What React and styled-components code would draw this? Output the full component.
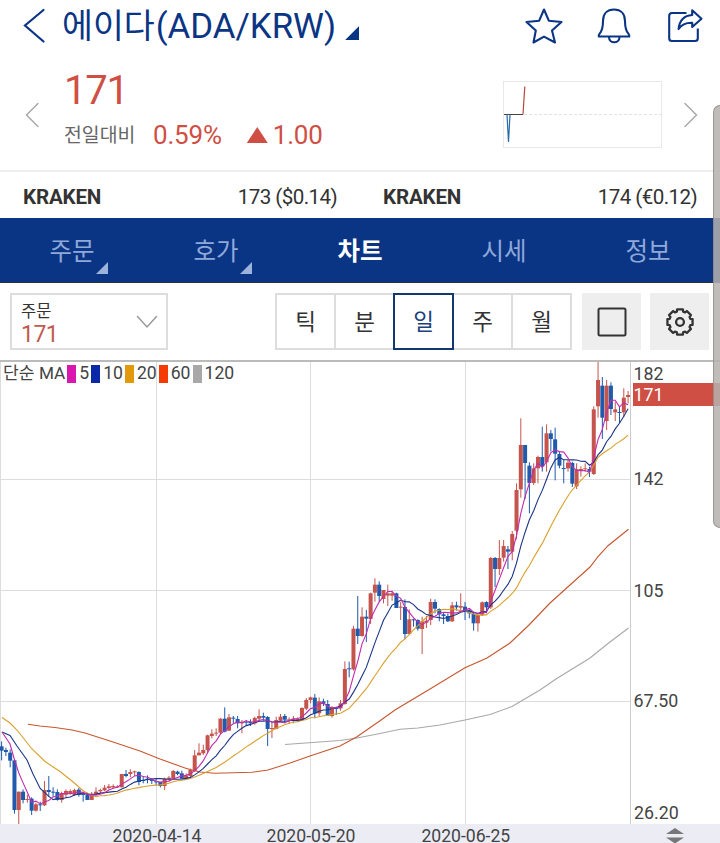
import React from 'react';
import styled, {createGlobalStyle} from 'styled-components';

const NAVY = '#0a3584';
const RED = '#cf4f45';
const BLUE = '#1f5aad';

const GlobalStyle = createGlobalStyle`
  * { box-sizing: border-box; }
  body {
    margin: 0;
    background: #fff;
    color: #333;
    font-family: Roboto, "Noto Sans CJK KR", sans-serif;
    overflow: hidden;
  }
  svg { display: block; flex: none; }
`;

const Screen = styled.div`
  position: relative;
  width: 720px;
  height: 843px;
  overflow: hidden;
  display: flex;
  flex-direction: column;
`;

const Header = styled.header`
  height: 51px;
  display: flex;
  align-items: center;
  padding: 0 16.5px 0 22px;
  color: ${NAVY};
`;

const Title = styled.h1`
  margin: 2px 0 0 15px;
  font-size: 34.8px;
  font-weight: 400;
  line-height: 51px;
  white-space: nowrap;
`;

const Korean = styled.span`
  margin-right: 1px;
  font-size: 33.6px;
`;

const Corner = styled.span`
  width: ${p => p.$size}px;
  height: ${p => p.$size}px;
  background: ${p => p.$color};
  clip-path: polygon(100% 0, 100% 100%, 0 100%);
`;

const TitleCorner = styled(Corner)`
  margin: 15px 0 0 9px;
`;

const HeaderIcons = styled.div`
  margin-left: auto;
  display: flex;
  align-items: center;
  gap: 30px;
`;

const PricePanel = styled.section`
  height: 121px;
  display: flex;
  align-items: flex-start;
  padding: 17px 21px 0 24px;
  border-bottom: 2px solid #eee;
`;

const Arrow = styled.div`
  width: 16px;
  padding-top: 34px;
`;

const Quote = styled.div`
  margin-left: 24px;
  flex: 1;
  color: ${RED};
`;

const Price = styled.div`
  padding-top: 1px;
  font-size: 40px;
  line-height: 44px;
  letter-spacing: -1.2px;
`;

const Change = styled.div`
  display: flex;
  align-items: center;
  margin-top: 4px;
  font-size: 26px;
  line-height: 36px;
  letter-spacing: -0.2px;
`;

const ChangeLabel = styled.span`
  width: 89px;
  padding-top: 2px;
  color: #666;
  font-size: 19.4px;
  line-height: 34px;
  letter-spacing: 0;
`;

const UpMark = styled.span`
  width: 21px;
  height: 16px;
  margin: 0 5px 0 25px;
  background: ${RED};
  clip-path: polygon(50% 0, 100% 100%, 0 100%);
`;

const MiniChart = styled.div`
  margin: 13px 21px 0 0;
`;

const Exchanges = styled.section`
  height: 46px;
  display: grid;
  grid-template-columns: 1fr 1fr;
`;

const Exchange = styled.div`
  display: flex;
  justify-content: space-between;
  padding: 2px 23px 0;
  font-size: 20.6px;
  line-height: 46px;
  letter-spacing: -0.6px;

  b { letter-spacing: -0.2px; }
`;

const Tabs = styled.nav`
  height: 65px;
  display: grid;
  grid-template-columns: repeat(5, 1fr);
  background: ${NAVY};
  border-bottom: 1px solid #26303f;
`;

const Tab = styled.div`
  position: relative;
  padding-top: 1px;
  color: ${p => (p.$active ? '#fff' : '#8fa8da')};
  font-size: 24.5px;
  font-weight: ${p => (p.$active ? 700 : 400)};
  line-height: 66px;
  height: 64px;
  text-align: center;
`;

const TabCorner = styled(Corner)`
  position: absolute;
  right: 36px;
  bottom: 8px;
`;

const Toolbar = styled.section`
  height: 77px;
  display: flex;
  align-items: flex-start;
  padding: 10px 10px 0;
`;

const OrderSelect = styled.div`
  width: 158px;
  height: 57px;
  display: flex;
  align-items: center;
  justify-content: space-between;
  padding: 0 8px 0 9px;
  border: 2px solid #ddd;
`;

const OrderLabel = styled.div`
  font-size: 16.5px;
  line-height: 20px;
  padding-top: 5px;
`;

const OrderPrice = styled.div`
  color: #bf5b50;
  font-size: 23px;
  line-height: 25px;
  letter-spacing: -0.5px;
`;

const Periods = styled.div`
  display: flex;
  margin-left: 107px;
`;

const Period = styled.div`
  width: 61px;
  height: 57px;
  margin-right: -2px;
  border: 2px solid ${p => (p.$active ? '#12386f' : '#ddd')};
  z-index: ${p => (p.$active ? 1 : 0)};
  color: ${p => (p.$active ? '#1c427c' : '#333')};
  font-size: 22.5px;
  line-height: 55px;
  text-align: center;
`;

const ToolButton = styled.div`
  width: 59px;
  height: 57px;
  margin-left: ${p => p.$gap}px;
  display: flex;
  align-items: center;
  justify-content: center;
  background: #eee;
`;

const ChartPanel = styled.section`
  position: relative;
  height: 483px;
  border-top: 2px solid #bbb;
`;

const Legend = styled.div`
  position: absolute;
  left: 3px;
  top: 0;
  display: flex;
  align-items: center;
  color: #444;
  font-size: 17.6px;
  line-height: 23px;
`;

const LegendName = styled.span`
  font-size: 17.2px;
`;

const Swatch = styled.i`
  width: 9px;
  height: 18px;
  margin: 0 3px 0 2px;
  background: ${p => p.$color};
`;

const ScrollThumb = styled.div`
  position: absolute;
  left: 713px;
  top: 105px;
  width: 14px;
  height: 423px;
  border: 1px solid rgba(130, 125, 120, 0.6);
  border-radius: 7px;
  background: rgba(181, 177, 173, 0.86);
`;

// Daily candles, grouped by the height they trade at.
// [up, high, top, bottom, low] in thirds of a pixel below the group base.
const GROUPS = [
  {base: 700, rows: [
    [0, 124, 139, 152, 181], [0, 143, 150, 156, 168], [0, 148, 158, 182, 202],
    [0, 181, 181, 330, 341], [1, 275, 275, 330, 372], [0, 268, 275, 300, 310],
    [1, 284, 297, 300, 308], [0, 292, 296, 332, 345], [1, 308, 313, 332, 335],
    [0, 305, 313, 316, 333], [1, 243, 270, 316, 318], [0, 228, 270, 276, 290],
    [0, 262, 275, 278, 290], [0, 268, 276, 300, 302], [1, 275, 279, 300, 308],
    [1, 268, 273, 284, 294], [1, 268, 273, 282, 284], [1, 266, 270, 285, 288],
    [0, 264, 269, 285, 290], [0, 278, 281, 285, 305], [0, 278, 283, 300, 300],
    [1, 276, 283, 300, 300], [1, 262, 275, 284, 284], [1, 266, 270, 274, 280],
    [1, 255, 263, 271, 274], [1, 252, 259, 264, 268], [1, 253, 258, 262, 266],
    [1, 256, 259, 262, 264], [1, 222, 222, 262, 262], [0, 210, 222, 228, 232],
    [1, 208, 216, 222, 232], [1, 212, 214, 217, 228], [0, 214, 216, 246, 256],
    [0, 228, 240, 243, 250], [0, 226, 236, 240, 250], [0, 234, 239, 243, 252],
    [0, 236, 244, 247, 256], [0, 246, 246, 258, 262], [1, 233, 235, 258, 270],
    [1, 228, 233, 237, 242], [1, 210, 213, 235, 238], [0, 212, 215, 222, 226],
    [0, 212, 220, 236, 238], [1, 220, 226, 236, 240], [1, 206, 210, 228, 236],
    [1, 150, 166, 213, 215], [1, 130, 158, 166, 166], [1, 134, 150, 160, 165],
    [1, 104, 106, 150, 160], [1, 88, 101, 108, 115],
  ]},
  {base: 660, rows: [
    [1, 205, 218, 221, 228], [1, 174, 176, 218, 222], [0, 142, 176, 215, 217],
    [1, 162, 172, 212, 213], [0, 168, 173, 176, 190], [0, 168, 177, 190, 205],
    [1, 180, 186, 190, 220], [0, 180, 185, 188, 198], [0, 178, 186, 190, 198],
    [1, 170, 174, 190, 194], [1, 148, 168, 176, 180], [0, 158, 168, 173, 182],
    [0, 168, 171, 207, 258], [1, 186, 204, 207, 234], [1, 170, 180, 207, 208],
    [1, 162, 170, 182, 185], [0, 162, 168, 179, 190], [1, 172, 178, 181, 192],
    [1, 168, 176, 179, 190], [1, 172, 177, 180, 186], [1, 142, 144, 180, 182],
    [1, 114, 120, 146, 150], [1, 110, 112, 120, 130], [0, 102, 113, 160, 175],
    [1, 112, 124, 160, 170], [0, 116, 124, 131, 138], [0, 120, 132, 168, 168],
    [1, 138, 142, 168, 173], [0, 140, 142, 147, 165], [1, 120, 130, 145, 152],
  ]},
  {base: 560, rows: [
    [1, 304, 327, 432, 434], [0, 305, 325, 328, 352], [1, 198, 206, 328, 332],
    [0, 108, 206, 228, 252], [1, 142, 170, 228, 230], [0, 150, 170, 176, 246],
    [1, 98, 100, 177, 192], [1, 55, 74, 98, 125], [0, 64, 74, 108, 125],
    [1, 90, 90, 117, 130], [1, 74, 100, 107, 138], [1, 92, 100, 107, 122],
    [0, 98, 100, 144, 144], [1, 125, 140, 143, 180], [0, 118, 141, 222, 238],
    [1, 148, 178, 222, 224], [0, 176, 178, 181, 200], [0, 178, 180, 206, 212],
    [1, 170, 184, 207, 282], [1, 168, 182, 188, 204], [1, 116, 126, 180, 195],
    [0, 118, 126, 146, 160], [0, 145, 147, 163, 184], [0, 158, 163, 168, 192],
    [0, 160, 168, 184, 186], [1, 126, 136, 184, 186], [0, 125, 136, 142, 152],
    [1, 100, 138, 143, 155], [0, 126, 140, 152, 180], [0, 148, 152, 160, 175],
    [0, 158, 162, 190, 212], [1, 160, 165, 190, 215], [1, 124, 127, 166, 168],
    [0, 124, 126, 142, 160],
  ]},
  {base: 355, rows: [
    [1, 606, 609, 757, 762], [0, 606, 609, 642, 696], [1, 555, 609, 642, 660],
    [1, 555, 573, 608, 620], [0, 573, 583, 590, 642], [1, 528, 537, 590, 616],
    [1, 385, 405, 527, 553], [1, 190, 270, 403, 428], [0, 270, 270, 324, 432],
    [0, 322, 332, 384, 475], [1, 325, 340, 384, 390], [1, 302, 306, 340, 385],
    [0, 215, 306, 334, 350], [1, 208, 235, 322, 350], [0, 225, 235, 252, 290],
    [0, 218, 253, 296, 376], [0, 290, 297, 332, 340], [0, 315, 339, 342, 385],
    [1, 315, 323, 340, 350], [0, 320, 324, 386, 396], [1, 325, 343, 394, 402],
    [1, 334, 342, 348, 365], [1, 325, 340, 343, 350], [0, 335, 342, 350, 366],
    [1, 154, 163, 357, 360], [1, 20, 75, 154, 188], [0, 66, 92, 188, 252],
    [1, 75, 92, 198, 225], [0, 82, 92, 162, 180], [1, 140, 163, 172, 198],
    [0, 155, 171, 174, 205], [1, 100, 128, 172, 186], [1, 108, 120, 126, 145],
  ]},
];

const xAt = i => 1.6 + i * 4.291;

const CANDLES = GROUPS.flatMap(({base, rows}) =>
  rows.map(([up, ...ys]) => {
    const [high, top, bottom, low] = ys.map(v => base + v / 3);
    return {up, high, top, bottom, low, close: up ? top : bottom};
  })
);

// moving average of the closes; lead holds the points before the first full window
const average = (size, lead) => {
  const points = lead.map(p => p.join());
  for (let i = size - 1; i < CANDLES.length; i++) {
    const sum = CANDLES.slice(i - size + 1, i + 1).reduce((s, c) => s + c.close, 0);
    points.push(`${xAt(i).toFixed(1)},${(sum / size).toFixed(1)}`);
  }
  return points.join(' ');
};

const LINES = [
  {name: '120', color: '#a8a8a8', points: '285,744.5 340,740.5 357,738 380,733.5 400,729.3 418,728 440,725 465,720 490,714.5 512,706.5 540,690 556,679 590,658 608,643.5 628.5,628'},
  {name: '60', color: '#c8562f', points: '28,724.3 40,726 55,727.5 72,730 85,733 110,741 140,751 160,759 185,768 192,770 200,772 215,773.3 252,772.3 268,770 290,763 310,756 340,746 357,736.7 380,720.7 395,710 430,689 465,667.7 487,658 510,643 529,625 550,603 570,585 590,567 598,556.7 608,545.7 628.5,529.3'},
  {name: '20', color: '#d9a02c', points: average(20, [[2, 717.5], [10, 723], [17, 730], [32, 749], [45, 761.5], [60, 771.5], [72, 781], [80, 788]])},
  {name: '10', color: '#1c3587', points: average(10, [[2, 732], [10, 735.5], [17, 746], [27, 760], [33, 774]])},
  {name: '5', color: '#c22bb0', points: average(5, [[2, 732], [10, 744], [14, 758]])},
];

const LEGEND = [
  ['5', '#d916ae'],
  ['10', '#0a28a8'],
  ['20', '#e29a0c'],
  ['60', '#f53a05'],
  ['120', '#a8a8a8'],
];

const Chevron = ({d, w, h, color, width = 1.5}) => (
  <svg width={w} height={h} fill="none" stroke={color} strokeWidth={width} strokeLinecap="round">
    <path d={d} />
  </svg>
);

const Star = () => (
  <svg width="40" height="40" viewBox="0 0 40 40" fill="none" stroke={NAVY} strokeWidth="2.1" strokeLinejoin="round">
    <path d="M20 3.5 L24.8 14.7 L37.5 16 L28 24.5 L31 36.5 L20 30.6 L9.5 36.5 L11.8 24.5 L2.5 16 L15.2 14.7 Z" />
  </svg>
);

const Bell = () => (
  <svg width="40" height="40" viewBox="0 0 40 40" fill="none" stroke={NAVY} strokeWidth="2.1" strokeLinejoin="round">
    <path d="M4.8 30.5 C4.3 29.4 4.8 28.6 5.8 27.4 C8.6 24 9 21 9 15 C9 8 13 3.5 20 3.5 C27 3.5 31 8 31 15 C31 21 31.4 24 34.2 27.4 C35.2 28.6 35.7 29.4 35.2 30.5 Z" />
    <path d="M15 31 C15 38 25.5 38 25.5 31" />
  </svg>
);

const Share = () => (
  <svg width="40" height="40" viewBox="0 0 40 40" fill="none" stroke={NAVY} strokeWidth="2.1" strokeLinejoin="round">
    <path d="M22.5 7 H8 Q5.2 7 5.2 9.8 V32.2 Q5.2 35 8 35 H31 Q33.8 35 33.8 32.2 V22.5" />
    <path d="M28.2 4.2 L37.5 12.8 L28.2 21 V16.8 C21.5 16.6 17.5 18.6 14.6 23 C15.4 15 19.5 9.6 28.2 9 Z" />
  </svg>
);

const gearPath = () => {
  const points = [];
  for (let k = 0; k < 8; k++) {
    [[-13, 12.9], [13, 12.9], [17, 10.8], [28, 10.8]].forEach(([deg, r]) => {
      const a = ((k * 45 + deg) * Math.PI) / 180;
      points.push(`${(15 + r * Math.sin(a)).toFixed(2)} ${(15 - r * Math.cos(a)).toFixed(2)}`);
    });
  }
  return `M${points.join(' L')} Z`;
};

const Gear = () => (
  <svg width="30" height="30" viewBox="0 0 30 30" fill="none" stroke="#333" strokeWidth="2.3" strokeLinejoin="round">
    <path d={gearPath()} />
    <circle cx="15" cy="15" r="3.9" />
  </svg>
);

const CandleChart = () => (
  <svg width="720" height="481" viewBox="0 362 720 481" fontSize="17.8" fill="#444">
    <g stroke="#ddd">
      <path d="M0.5 362V824M156.5 362V824M310.5 362V824M465.5 362V824" />
      <path d="M0 479.5H630M0 590.5H630M0 701.5H630" />
      <path d="M630.5 362V824" stroke="#ccc" />
    </g>
    {CANDLES.map((c, i) => (
      <g key={i} fill={c.up ? '#c5544c' : BLUE}>
        <rect x={xAt(i) - 0.5} y={c.high} width="1" height={c.low - c.high} />
        <rect x={xAt(i) - 2} y={c.top} width="4" height={c.bottom - c.top} />
      </g>
    ))}
    {LINES.map(line => (
      <polyline key={line.name} points={line.points} fill="none" stroke={line.color} strokeWidth="1.1" />
    ))}
    <text x="633.5" y="379.5">182</text>
    <rect x="633" y="383" width="87" height="23" fill={RED} />
    <text x="633.5" y="401" fill="#fff">171</text>
    <text x="633.5" y="485">142</text>
    <text x="633.5" y="596.5">105</text>
    <text x="633.5" y="707">67.50</text>
    <text x="634" y="819">26.20</text>
    <rect x="0" y="824" width="720" height="19" fill="#ecedf4" />
    <g textAnchor="middle" fontSize="17.6">
      <text x="157" y="841.5">2020-04-14</text>
      <text x="311" y="841.5">2020-05-20</text>
      <text x="465.8" y="841.5">2020-06-25</text>
    </g>
    <path d="M666 834 L675 828 L684 834 Z M666 837.5 H684 L675 843.5 Z" fill="#777" />
  </svg>
);

const App = () => (
  <Screen>
    <GlobalStyle />
    <Header>
      <Chevron w={25} h={38} color={NAVY} width={2.2} d="M21.5 3 L3 18.5 L21.5 34.5" />
      <Title><Korean>에이다</Korean>(ADA/KRW)</Title>
      <TitleCorner $size={14} $color={NAVY} />
      <HeaderIcons>
        <Star />
        <Bell />
        <Share />
      </HeaderIcons>
    </Header>

    <PricePanel>
      <Arrow><Chevron w={16} h={26} color="#aaa" d="M14 1.5 L2.5 13 L14 24.5" /></Arrow>
      <Quote>
        <Price>171</Price>
        <Change>
          <ChangeLabel>전일대비</ChangeLabel>
          0.59%
          <UpMark />
          1.00
        </Change>
      </Quote>
      <MiniChart>
        <svg width="159" height="67" fill="none">
          <rect x="0.5" y="0.5" width="158" height="66" stroke="#e8e8e8" />
          <path d="M1 33.5H158" stroke="#e2e2e2" strokeDasharray="3 2" />
          <path d="M1 33.5H20" stroke="#444" />
          <path d="M4 33.5L5.5 61L7 33.5" stroke="#2a6ba8" strokeWidth="1.2" />
          <path d="M20 33.5L21.8 5.5" stroke="#b8483f" strokeWidth="1.2" />
        </svg>
      </MiniChart>
      <Arrow><Chevron w={16} h={26} color="#aaa" d="M2 1.5 L13.5 13 L2 24.5" /></Arrow>
    </PricePanel>

    <Exchanges>
      <Exchange><b>KRAKEN</b>173 ($0.14)</Exchange>
      <Exchange><b>KRAKEN</b>174 (€0.12)</Exchange>
    </Exchanges>

    <Tabs>
      <Tab>주문<TabCorner $size={12} $color="#9db2dd" /></Tab>
      <Tab>호가<TabCorner $size={12} $color="#9db2dd" /></Tab>
      <Tab $active>차트</Tab>
      <Tab>시세</Tab>
      <Tab>정보</Tab>
    </Tabs>

    <Toolbar>
      <OrderSelect>
        <div>
          <OrderLabel>주문</OrderLabel>
          <OrderPrice>171</OrderPrice>
        </div>
        <Chevron w={22} h={14} color="#999" d="M1.5 1.5 L11 12 L20.5 1.5" />
      </OrderSelect>
      <Periods>
        {['틱', '분', '일', '주', '월'].map(p => (
          <Period key={p} $active={p === '일'}>{p}</Period>
        ))}
      </Periods>
      <ToolButton $gap={12}>
        <svg width="30" height="30" fill="none" stroke="#333" strokeWidth="2">
          <rect x="1.5" y="1.5" width="27" height="27" rx="1.5" />
        </svg>
      </ToolButton>
      <ToolButton $gap={9}><Gear /></ToolButton>
    </Toolbar>

    <ChartPanel>
      <CandleChart />
      <Legend>
        <LegendName>단순 MA</LegendName>
        {LEGEND.map(([label, color]) => (
          <React.Fragment key={label}>
            <Swatch $color={color} />
            {label}
          </React.Fragment>
        ))}
      </Legend>
    </ChartPanel>

    <ScrollThumb />
  </Screen>
);

export default App;
